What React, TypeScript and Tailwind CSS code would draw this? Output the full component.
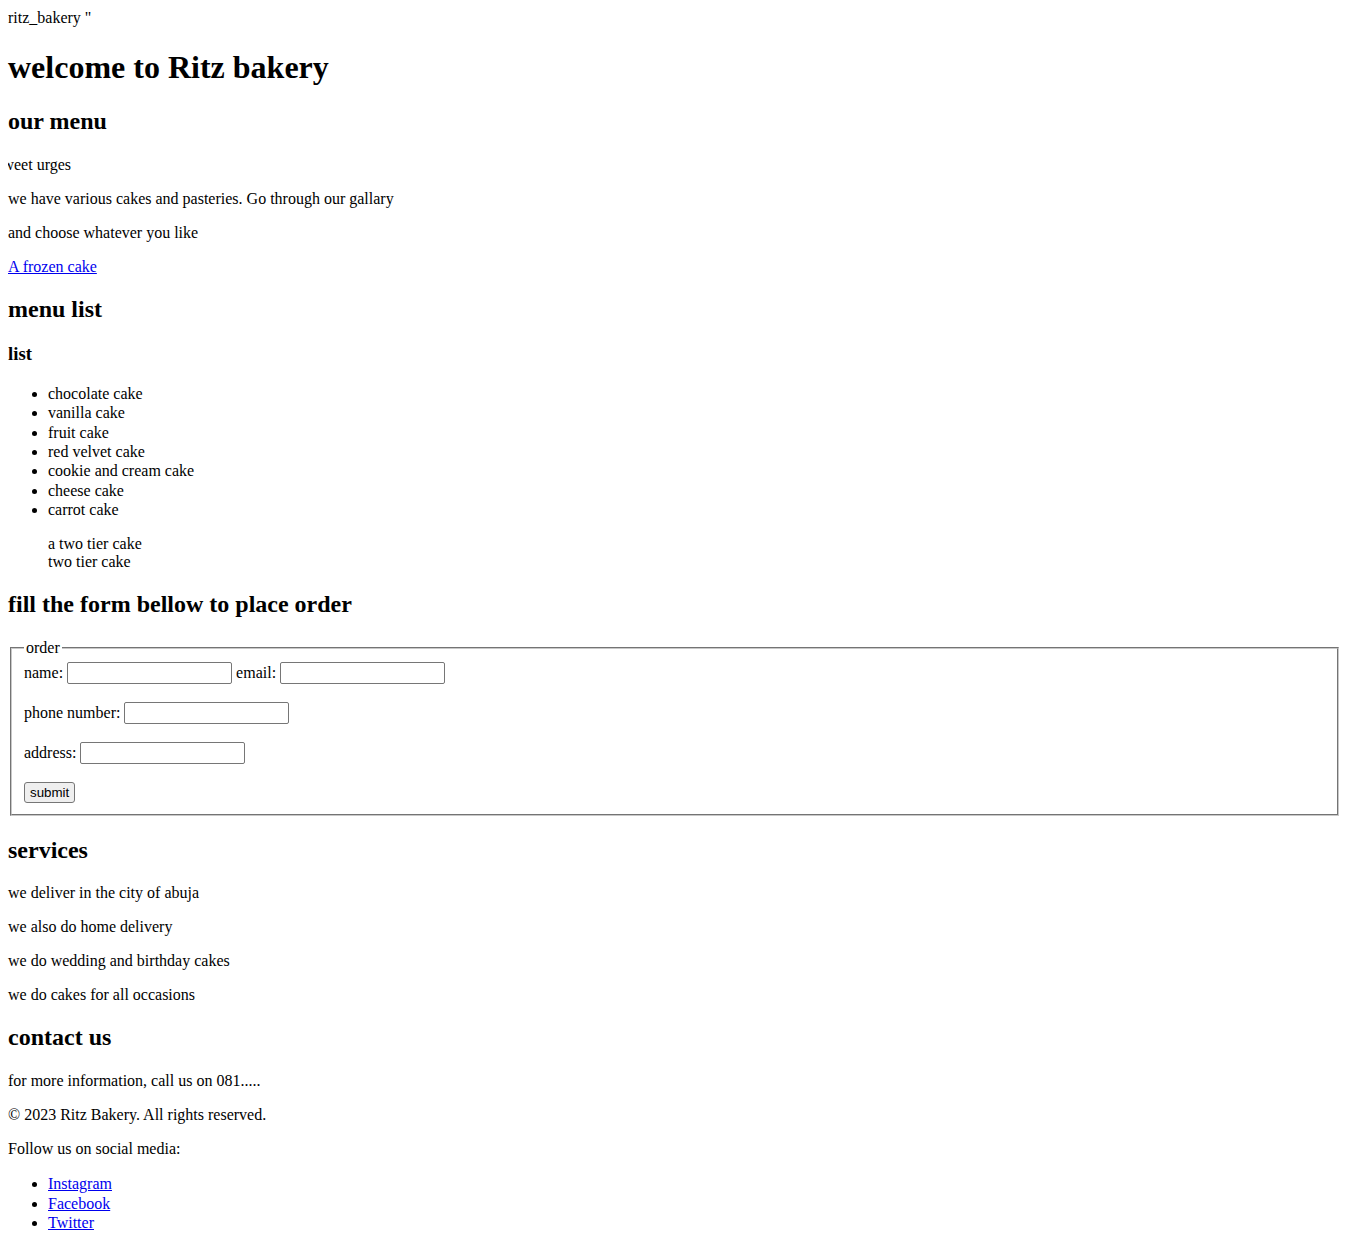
import React from "react";

const menu = [
  "chocolate cake",
  "vanilla cake",
  "fruit cake",
  "red velvet cake",
  "cookie and cream cake",
  "cheese cake",
  "carrot cake",
];

const services = [
  "we deliver in the city of abuja",
  "we also do home delivery",
  "we do wedding and birthday cakes",
  "we do cakes for all occasions",
];

const socials = ["Instagram", "Facebook", "Twitter"];

function Field({ label }: { label: string }) {
  return (
    <>
      {label}{" "}
      <input
        type="text"
        className="w-[165px] h-[22px] border border-[#767676] rounded-[2px] px-[2px] py-[1px] bg-white text-[13.33px] font-['Liberation_Sans',Arial,sans-serif] align-baseline"
      />
    </>
  );
}

export default function App() {
  return (
    <div className="px-2 pt-[9px] pb-2 bg-white text-black text-base leading-[normal] font-['Liberation_Serif','Times_New_Roman',serif]">
      <div>ritz_bakery "</div>
      <h1 className="text-[32px] font-bold mt-[22.44px] mb-[21.44px]">welcome to Ritz bakery</h1>

      <h2 className="text-[24px] font-bold mt-[19.92px] mb-[20.92px]">our menu</h2>
      <p className="my-4 overflow-hidden whitespace-nowrap">
        <span className="inline-block -ml-[11.8px]">sweet urges</span>
      </p>
      <p className="my-4">we have various cakes and pasteries. Go through our gallary</p>
      <p className="my-4">and choose whatever you like</p>
      <p className="my-4">
        <a href="#" className="text-[#0000ee] underline">A frozen cake</a>
      </p>

      <h2 className="text-[24px] font-bold my-[19.92px]">menu list</h2>
      <h3 className="text-[18.72px] font-bold mt-[20.72px] mb-[18.72px]">list</h3>
      <ul className="list-disc pl-10 my-4">
        {menu.map((m) => (
          <li key={m} className="leading-[19.3px]">{m}</li>
        ))}
      </ul>
      <figure className="my-4 mx-10">
        <div>a two tier cake</div>
        <div>two tier cake</div>
      </figure>

      <h2 className="text-[24px] font-bold mt-[19.92px] mb-[20.92px]">fill the form bellow to place order</h2>
      <form>
        <fieldset className="mx-[2px] min-w-0 border-2 [border-style:groove] border-[#c8c8c8] px-3 pt-[4.6px] pb-[11px]">
          <legend className="px-[2px]">order</legend>
          <div>
            <Field label="name:" /> <Field label="email:" />
          </div>
          <div className="mt-[18px]">
            <Field label="phone number:" />
          </div>
          <div className="mt-[18px]">
            <Field label="address:" />
          </div>
          <div className="mt-[18px]">
            <button
              type="button"
              className="h-[21px] bg-[#efefef] border border-[#767676] rounded-[3px] px-[5px] text-[13.33px] font-['Liberation_Sans',Arial,sans-serif]"
            >
              submit
            </button>
          </div>
        </fieldset>
      </form>

      <h2 className="text-[24px] font-bold mt-[20.92px] mb-[20.92px]">services</h2>
      {services.map((s) => (
        <p key={s} className="my-4">{s}</p>
      ))}

      <h2 className="text-[24px] font-bold mt-[19.92px] mb-[20.92px]">contact us</h2>
      <p className="my-4">for more information, call us on 081.....</p>
      <p className="my-4">© 2023 Ritz Bakery. All rights reserved.</p>
      <p className="my-4">Follow us on social media:</p>
      <ul className="list-disc pl-10 my-4">
        {socials.map((s) => (
          <li key={s} className="leading-[19.3px]">
            <a href="#" className="text-[#0000ee] underline">{s}</a>
          </li>
        ))}
      </ul>
    </div>
  );
}
